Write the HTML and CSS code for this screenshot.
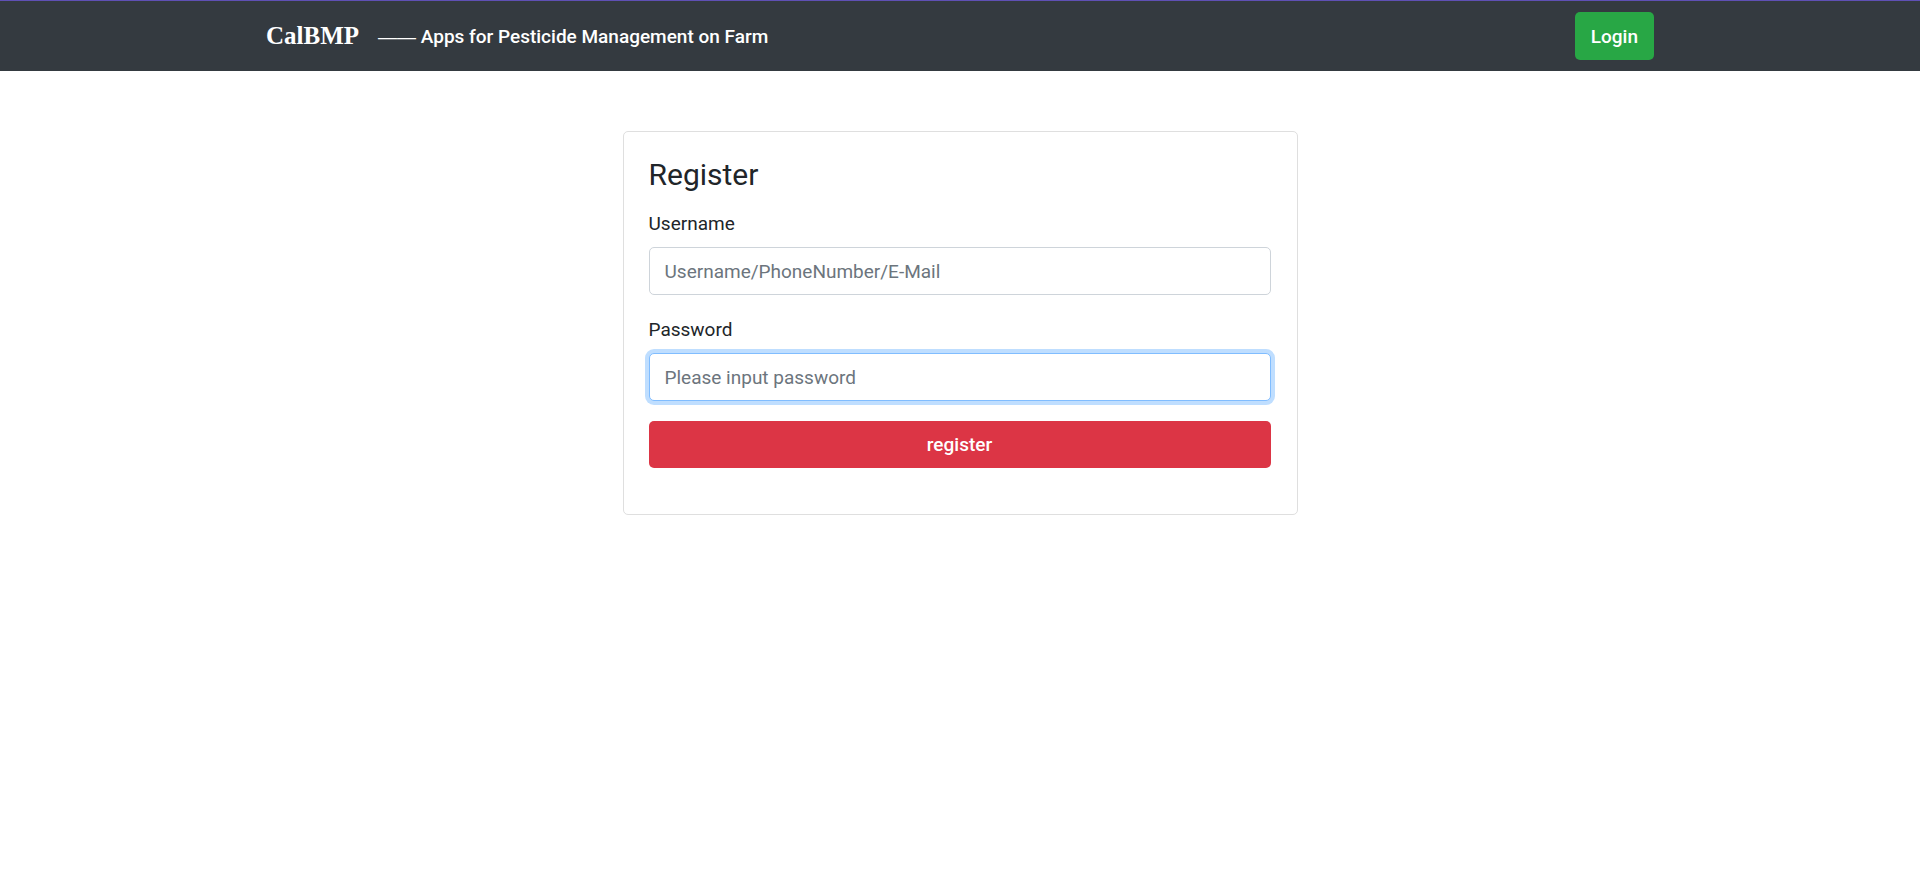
FILE: index.html
```
<!DOCTYPE html>
<html lang="en">
<head>
<meta charset="utf-8">
<title>CalBMP</title>
<link rel="stylesheet" href="styles.css">
</head>
<body>
<header class="navbar">
  <div class="navbar-inner">
    <a class="brand" href="#">CalBMP</a>
    <span class="tagline"><span class="dash">——</span> Apps for Pesticide Management on Farm</span>
    <button class="btn btn-login" type="button">Login</button>
  </div>
</header>
<main class="page">
  <form class="card">
    <h1 class="card-title">Register</h1>
    <div class="field">
      <label for="username">Username</label>
      <input class="control" id="username" type="text" placeholder="Username/PhoneNumber/E-Mail">
    </div>
    <div class="field">
      <label for="password">Password</label>
      <input class="control control-active" id="password" type="password" placeholder="Please input password">
    </div>
    <button class="btn btn-register" type="button">register</button>
  </form>
</main>
</body>
</html>
```
FILE: styles.css
```
* { box-sizing: border-box; }
body {
  margin: 0;
  background: #fff;
  color: #212529;
  font-family: Roboto, "Liberation Sans", sans-serif;
  font-size: 19px;
  line-height: 30px;
}
.navbar {
  border-top: 1px solid #5f50b5;
  background: #343a40;
  color: #fff;
  padding: 11px 20px;
}
.navbar-inner {
  display: flex;
  align-items: center;
  max-width: 1388px;
  margin: 0 auto;
}
.brand {
  color: #fff;
  font: bold 25px/30px "Liberation Serif", serif;
  text-decoration: none;
  margin-right: 19px;
}
.tagline {
  padding-top: 2px;
  font-weight: 500;
}
.dash { font-family: "Liberation Sans", sans-serif; }
.btn {
  border: 0;
  border-radius: 5px;
  color: #fff;
  font: inherit;
  font-weight: 500;
  cursor: pointer;
}
.btn-login {
  margin-left: auto;
  padding: 10px 16px 8px;
  background: #28a745;
}
.page { padding: 60px 20px; }
.card {
  max-width: 675px;
  margin: 0 auto;
  padding: 25px 26px 46px 25px;
  border: 1px solid #dfdfdf;
  border-radius: 5px;
}
.card-title {
  margin: 0 0 16px;
  font-size: 30px;
  line-height: 36px;
  font-weight: 400;
}
.field {
  display: flex;
  flex-direction: column;
  gap: 8px;
  margin-bottom: 20px;
}
.control {
  width: 100%;
  height: 48px;
  padding: 0 15px;
  border: 1px solid #ced4da;
  border-radius: 5px;
  background: #fff;
  color: #495057;
  font: inherit;
  outline: 0;
}
.control::placeholder { color: #6c757d; opacity: 1; }
.control-active, .control:focus {
  border-color: #80bdff;
  box-shadow: 0 0 0 4px #bfdeff;
}
.btn-register {
  display: block;
  width: 100%;
  height: 47px;
  background: #dc3545;
}
```
